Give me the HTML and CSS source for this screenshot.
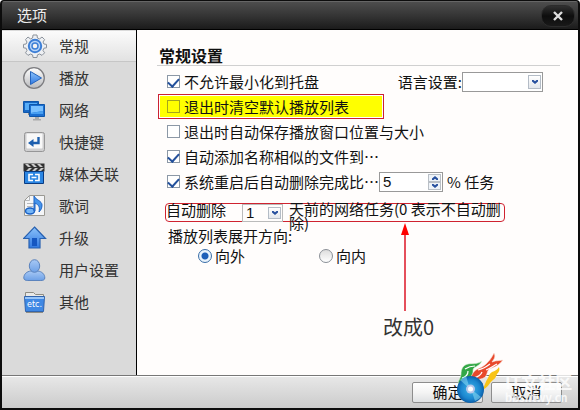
FILE: index.html
```html
<!DOCTYPE html>
<html lang="zh-CN">

<head>
    <meta charset="UTF-8">
    <meta name="viewport" content="width=device-width, initial-scale=1.0">
    <title>选项</title>
    <link rel="stylesheet" href="styles.css">
</head>

<body>
    <div class="window">
        <header class="titlebar">
            <h1 class="title">选项</h1>
            <button class="close" type="button" aria-label="关闭">
                <svg width="10" height="10" viewBox="0 0 10 10"><path d="M1 1l8 8M9 1L1 9" stroke="#ddd" stroke-width="2.4" /></svg>
            </button>
        </header>

        <div class="body">
            <nav class="sidebar">
                <a class="nav-item active" href="#general">
                    <svg class="icon" viewBox="0 0 24 24">
                        <path d="M10 1h4l.4 3 2.2.9L19 3l2.6 2.6L20 8l.9 2 2.6.4v3.4l-2.6.4-.9 2.3 1.6 2.3-2.6 2.6-2.3-1.4-2.3.9-.4 2.6h-4l-.4-2.6-2.2-.9L5 21.400l-2.500-2.600L4 16.500l-.9-2.300-2.600-.4v-3.400l2.600-.4L4 8 2.500 5.600 5 3l2.400 1.900L9.600 4z" fill="#eef0f3" stroke="#8b929b" />
                        <circle cx="12" cy="12" r="6.200" fill="#b9d6f8" stroke="#3d7fd6" stroke-width="2" />
                        <circle cx="12" cy="12" r="3" fill="#f2f2f2" stroke="#3d7fd6" stroke-width="1.5" />
                    </svg>
                    常规
                </a>
                <a class="nav-item" href="#play">
                    <svg class="icon" viewBox="0 0 24 24">
                        <circle cx="11" cy="12" r="10.300" fill="url(#silver)" stroke="#7d7d80" stroke-width="1.3" />
                        <path d="M7.500 5.500v13L18.500 12z" fill="url(#blue)" stroke="#2464bd" />
                    </svg>
                    播放
                </a>
                <a class="nav-item" href="#network">
                    <svg class="icon" viewBox="0 0 24 24">
                        <path d="M.5 3.500h15v11H.5z" fill="#1767c4" stroke="#0f56aa" />
                        <path d="M2 5h12v7H2z" fill="#57adf8" />
                        <path d="M5 15h4v2H5z" fill="#888" />
                        <path d="M6.500 6.500h15v12h-15z" fill="#1c70d2" stroke="#0f56aa" />
                        <path d="M8 8h12v5L8 15z" fill="#7bc1ff" />
                        <path d="M8 15l12-2v3H8z" fill="#48a0f2" />
                        <path d="M12 19h4v2h2v1.500h-8V21h2z" fill="#aaa" />
                    </svg>
                    网络
                </a>
                <a class="nav-item" href="#hotkeys">
                    <svg class="icon" viewBox="0 0 24 24">
                        <rect x="1.500" y="2.500" width="20" height="19" rx="2" fill="#cfcfd0" stroke="#969697" />
                        <rect x="3.500" y="3.500" width="16" height="15" rx="1" fill="#f8f8f8" />
                        <path d="M15.500 7v6H9" fill="none" stroke="#1d5fae" stroke-width="2.4" />
                        <path d="M5 13l5.500-4v8z" fill="#1d5fae" />
                    </svg>
                    快捷键
                </a>
                <a class="nav-item" href="#media">
                    <svg class="icon" viewBox="0 0 24 24">
                        <path d="M.5 1.500h21v8H.5z" fill="#303030" />
                        <path d="M2 2l3 3h3L5 2zM8 2l3 3h3l-3-3zM14 2l3 3h3l-3-3zM3 9l3-3h3L6 9zM9 9l3-3h3l-3 3zM15 9l3-3h3l-3 3z" fill="#c9c9c9" />
                        <path d="M1.500 9.500h19v12h-19z" fill="#2b86e3" stroke="#083b82" />
                        <path d="M10 12.500H6v6h4M12 12.500h4v6h-4M8.500 15.500h5" fill="none" stroke="#fff" stroke-width="1.6" />
                    </svg>
                    媒体关联
                </a>
                <a class="nav-item" href="#lyrics">
                    <svg class="icon" viewBox="0 0 24 24">
                        <path d="M6.500 1.500h15v20h-20v-15z" fill="#f4f5f7" stroke="#9a9993" />
                        <path d="M2 6.500h4.500V2M4 9.500h8M4 12.500h6" fill="none" stroke="#b4b7bb" />
                        <ellipse cx="7" cy="17" rx="4.500" ry="3" fill="#75b6f7" stroke="#1c62c4" stroke-width="1.5" />
                        <path d="M11 17V2c2 4 8 5 8 9 0 3-1 5-3 7 1-5 0-7-4-9v8z" fill="#4594eb" stroke="#1c62c4" />
                    </svg>
                    歌词
                </a>
                <a class="nav-item" href="#update">
                    <svg class="icon" viewBox="0 0 24 24">
                        <path d="M11.500 1L22.500 12.500H17v9.500H6v-9.500H.5z" fill="url(#blue)" stroke="#2861b0" stroke-width="1.2" />
                        <path d="M9 12h5v8H9z" fill="#1557c1" />
                    </svg>
                    升级
                </a>
                <a class="nav-item" href="#user">
                    <svg class="icon" viewBox="0 0 24 24">
                        <path d="M.8 20c0-4 3-6.500 7-7h7c4 .5 7 3 7 7 0 2-2 2.500-4 2.500h-13c-2 0-4-.5-4-2.500z" fill="url(#pale)" stroke="#5b83bd" />
                        <ellipse cx="11.500" cy="8" rx="5.200" ry="6.300" fill="url(#pale)" stroke="#5b83bd" />
                    </svg>
                    用户设置
                </a>
                <a class="nav-item" href="#other">
                    <svg class="icon" viewBox="0 0 24 24">
                        <path d="M2.500 7V2.500h8l2 2h8V7z" fill="#e9e9e7" stroke="#8e8c83" />
                        <path d="M1.500 6.500h20l-1 15h-18z" fill="#3f88e4" stroke="#3164ad" />
                        <path d="M2 7h19v2H2z" fill="#98c5f8" />
                        <path d="M3 22.500h17" stroke="#8e8c83" />
                        <text class="icon-text" x="11.500" y="17" text-anchor="middle">etc.</text>
                    </svg>
                    其他
                </a>
            </nav>

            <main class="content">
                <h2 class="heading">常规设置</h2>

                <div class="row">
                    <input class="check" type="checkbox" id="noTray" checked>
                    <label for="noTray">不允许最小化到托盘</label>
                    <label class="language-label" for="language">语言设置:</label>
                    <span class="select-wrap language">
                        <select class="field" id="language">
                            <option></option>
                        </select>
                        <span class="drop"><svg width="6" height="4" viewBox="0 0 6 4"><path d="M0 0h1.500L3 1.200 4.500 0H6v1.500L3 4 0 1.500z" fill="#27509e" /></svg></span>
                    </span>
                </div>
                <div class="row highlight">
                    <input class="check" type="checkbox" id="clearList">
                    <label for="clearList">退出时清空默认播放列表</label>
                </div>
                <div class="row">
                    <input class="check" type="checkbox" id="savePos">
                    <label for="savePos">退出时自动保存播放窗口位置与大小</label>
                </div>
                <div class="row">
                    <input class="check" type="checkbox" id="addSimilar" checked>
                    <label for="addSimilar">自动添加名称相似的文件到⋯</label>
                </div>
                <div class="row">
                    <input class="check" type="checkbox" id="delDone" checked>
                    <label for="delDone">系统重启后自动删除完成比⋯</label>
                    <span class="spin-wrap">
                        <input class="field" type="number" value="5" aria-label="完成比例">
                        <span class="spin">
                            <button class="spin-button" type="button" aria-label="增加"><svg width="6" height="4" viewBox="0 0 6 4"><path d="M0 4h1.500L3 2.800 4.500 4H6V2.500L3 0 0 2.500z" fill="#27509e" /></svg></button>
                            <button class="spin-button" type="button" aria-label="减少"><svg width="6" height="4" viewBox="0 0 6 4"><path d="M0 0h1.500L3 1.200 4.500 0H6v1.500L3 4 0 1.500z" fill="#27509e" /></svg></button>
                        </span>
                    </span>
                    <span class="unit">% 任务</span>
                </div>

                <div class="auto-delete">
                    <label class="auto-label" for="days">自动删除</label>
                    <span class="select-wrap days">
                        <select class="field" id="days">
                            <option>1</option>
                        </select>
                        <span class="drop"><svg width="6" height="4" viewBox="0 0 6 4"><path d="M0 0h1.500L3 1.200 4.500 0H6v1.500L3 4 0 1.500z" fill="#27509e" /></svg></span>
                    </span>
                    <span class="auto-text">天前的网络任务(0 表示不自动删除)</span>
                    <div class="note">
                        <svg class="arrow" width="10" height="88" viewBox="0 0 10 88">
                            <path d="M5 8v80" stroke="#dc1426" stroke-width="1.5" />
                            <path d="M5 0l4 12H1z" fill="#f00" />
                        </svg>
                        <span class="note-text">改成0</span>
                    </div>
                </div>

                <fieldset class="direction">
                    <legend>播放列表展开方向:</legend>
                    <div class="radios">
                        <label class="radio-label"><input class="radio" type="radio" name="direction" checked>向外</label>
                        <label class="radio-label"><input class="radio" type="radio" name="direction">向内</label>
                    </div>
                </fieldset>
            </main>
        </div>

        <footer class="footer">
            <button class="button" type="button">确定</button>
            <button class="button" type="button">取消</button>
            <div class="watermark">
                <svg width="48" height="52" viewBox="0 0 48 52">
                    <path d="M25 38c3-4 3-8 6-12 1-2 1-4 4-6 3-1 5-2 7-5 1 3 0 5-2 7-1 2-1 4-4 6-4 3-5 8-11 10z" fill="#f8c417" />
                    <path d="M1 32c0-4 3-6 3-10 0-5 2-9 7-10 4-1 8 1 14-3-2 4-5 5-8 7-2 2 0 5-2 8-2 4-9 3-14 8z" fill="#33a746" stroke="#e8f3df" stroke-width=".6" />
                    <path d="M5 26c4-1 6-4 6-7M8 17c3-2 5-3 10-3" fill="none" stroke="#fff" stroke-width="1.2" />
                    <path d="M12 31c3-3 1-6 4-10 3-5 8-4 13-9 3-3 5-5 8-11 2 4 0 6-2 9 5-2 7-1 11-2-3 4-6 6-11 8-5 1-4 4-6 8-4 5-11 2-17 7z" fill="#e8492c" stroke="#fbe7df" stroke-width=".6" />
                    <path d="M16 26c5-1 8-3 9-6M21 18c5-1 8-3 12-6M29 18c4-1 7-4 11-6" fill="none" stroke="#fff" stroke-width="1.2" />
                    <circle cx="13.500" cy="37.500" r="13.500" fill="url(#disc)" />
                    <path d="M13 37L3 28a13 13 0 0 1 6-4zM14 37l10 8a13 13 0 0 1-6 4z" fill="#8adcf4" opacity=".55" />
                    <circle cx="13.500" cy="37" r="4.500" fill="#b7c7ea" />
                    <circle cx="13.500" cy="37" r="2.500" fill="#fff" />
                </svg>
                <div class="watermark-text">
                    <span class="watermark-name">IT文社区</span>
                    <span class="watermark-url">bbs.itwy.cn</span>
                </div>
            </div>
        </footer>
    </div>

    <!-- 图标用的渐变 -->
    <svg class="defs" width="0" height="0">
        <defs>
            <linearGradient id="silver" x1="0" y1="0" x2="0" y2="1">
                <stop offset="0" stop-color="#fff" />
                <stop offset="1" stop-color="#b9babd" />
            </linearGradient>
            <linearGradient id="blue" x1="0" y1="0" x2="0" y2="1">
                <stop offset="0" stop-color="#8cc3fb" />
                <stop offset="1" stop-color="#3078e0" />
            </linearGradient>
            <linearGradient id="pale" x1="0" y1="0" x2="0" y2="1">
                <stop offset="0" stop-color="#a8c9f5" />
                <stop offset="1" stop-color="#6da0e6" />
            </linearGradient>
            <radialGradient id="disc">
                <stop offset="0" stop-color="#3fb4e8" />
                <stop offset=".7" stop-color="#1b86cf" />
                <stop offset="1" stop-color="#0b5ea8" />
            </radialGradient>
        </defs>
    </svg>
</body>

</html>
```
FILE: styles.css
```css
* {
    box-sizing: border-box;
}

body {
    margin: 0;
    background: #fff;
    font-family: "Noto Sans CJK SC", sans-serif;
    font-size: 15px;
    line-height: 16px;
    color: #111;
}

button,
input,
select {
    font: inherit;
    color: inherit;
    margin: 0;
    padding: 0;
}

svg {
    display: block;
}

.defs {
    position: absolute;
}

.window {
    display: flex;
    flex-direction: column;
    min-height: 100vh;
    border: 2px solid #0c0c0c;
    border-top-width: 1px;
    border-radius: 4px 4px 0 0;
    overflow: hidden;
    background: #0c0c0c;
}

.titlebar {
    display: flex;
    align-items: center;
    justify-content: space-between;
    height: 29px;
    padding: 0 3px 0 15px;
    background: linear-gradient(#4d4d4d, #353535 50%, #1b1b1b);
    border-top: 1px solid #666;
    border-bottom: 1px solid #000;
}

.title {
    margin: 0;
    font-size: 15px;
    font-weight: normal;
    line-height: 24px;
    padding-bottom: 2px;
    color: #eee;
}

.close {
    display: flex;
    align-items: center;
    justify-content: center;
    width: 34px;
    height: 22px;
    border: 1px solid #2c2c2c;
    border-radius: 10px;
    background: linear-gradient(#303030, #0d0d0d 50%, #191919);
}

.body {
    display: flex;
    flex: 1;
    background: #fffdfc;
}

.sidebar {
    width: 135px;
    background: #dadada;
    border-right: 1px solid #000;
}

.nav-item {
    display: flex;
    align-items: center;
    gap: 12px;
    height: 32px;
    padding-left: 21px;
    color: #333;
    text-decoration: none;
}

.nav-item.active {
    background: linear-gradient(#fbfbfb, #e2e2e2);
    border-top: 1px solid #dadada;
    border-bottom: 1px solid #c6c6c6;
}

.icon {
    width: 24px;
    height: 24px;
}

.icon-text {
    font-family: "DejaVu Sans", sans-serif;
    font-size: 8px;
    fill: #fff;
}

.content {
    flex: 1;
    padding: 10px 18px 0 20px;
}

.heading {
    margin: 0 0 3px;
    padding: 5px 0 0 2px;
    font-size: 16px;
    line-height: 20px;
    border-bottom: 1px solid #d0d0d0;
}

.row {
    display: flex;
    align-items: center;
    height: 25px;
    padding-left: 10px;
    white-space: nowrap;
}

.check {
    appearance: none;
    display: flex;
    justify-content: center;
    width: 13px;
    height: 13px;
    margin-right: 4px;
    background: #fff;
    border: 1px solid #8c98a6;
}

.check:checked::before {
    content: "";
    width: 5px;
    height: 9px;
    border: solid #24519c;
    border-width: 0 2px 2px 0;
    transform: rotate(42deg);
}

.highlight {
    width: 226px;
    padding-left: 8px;
    margin-left: 1px;
    border: 1px solid #cc2233;
    background: #ff0;
    box-shadow: inset 0 0 0 1px #fff;
}

.highlight .check {
    background: #ff0;
    border-color: #a5a51c;
}

.language-label {
    margin-left: auto;
}

.select-wrap,
.spin-wrap {
    position: relative;
    height: 20px;
}

.language {
    width: 81px;
    margin-right: 17px;
}

.field {
    appearance: none;
    display: block;
    width: 100%;
    height: 100%;
    padding-left: 3px;
    border: 1px solid #999;
    border-radius: 0;
    background: #fff;
    font-family: "Liberation Sans", sans-serif;
}

.field::-webkit-inner-spin-button {
    appearance: none;
}

.drop {
    position: absolute;
    top: 3px;
    right: 2px;
    bottom: 3px;
    display: flex;
    align-items: center;
    justify-content: center;
    width: 13px;
    border: 1px solid #b4bcc6;
    background: linear-gradient(#fff, #e3e7ec);
    pointer-events: none;
}

.spin-wrap {
    width: 64px;
}

.spin {
    position: absolute;
    top: 2px;
    right: 2px;
    bottom: 2px;
    display: flex;
    flex-direction: column;
    width: 13px;
}

.spin-button {
    display: flex;
    flex: 1;
    align-items: center;
    justify-content: center;
    border: 1px solid #b9bfc6;
    background: #eef3f8;
}

.unit {
    margin-left: 4px;
}

.auto-delete {
    position: relative;
    display: flex;
    width: 340px;
    height: 19px;
    margin: 9px 0 0 8px;
    border: 1px solid #cf2330;
    border-radius: 4px;
}

.auto-label {
    width: 76px;
    line-height: 12px;
}

.days {
    width: 41px;
    height: 18px;
}

.days .field {
    border-color: #bbb;
    background: transparent;
}

.auto-text {
    flex: 1;
    margin: -2px 0 0 6px;
    line-height: 14px;
}

/* 箭头和说明文字, 盖在表单上 */
.note {
    position: absolute;
    top: 19px;
    left: 217px;
}

.arrow {
    margin-left: 17px;
}

.note-text {
    display: block;
    margin-top: 6px;
    font-size: 20px;
    line-height: 20px;
    color: #333;
}

.direction {
    margin: 6px 0 0;
    padding: 0 0 0 11px;
    border: 0;
}

.direction legend {
    padding: 0;
}

.radios {
    display: flex;
    gap: 74px;
    padding: 4px 0 0 30px;
}

.radio-label {
    display: flex;
    align-items: center;
    gap: 3px;
}

.radio {
    appearance: none;
    width: 14px;
    height: 14px;
    border: 1px solid #8a8f96;
    border-radius: 50%;
    background: linear-gradient(#ddd, #fff);
}

.radio:checked {
    border-color: #3a6ea8;
    background: radial-gradient(circle, #1d5fb8 3px, #e9f3fc 4px);
}

.footer {
    position: relative;
    display: flex;
    align-items: center;
    justify-content: flex-end;
    gap: 8px;
    height: 33px;
    padding-right: 16px;
    background: linear-gradient(#e8e8e8, #cbcbcb);
    border-top: 1px solid #777;
    box-shadow: inset 0 1px 0 #fff;
}

.button {
    width: 71px;
    height: 21px;
    border: 1px solid #8d8d8d;
    border-radius: 2px;
    background: linear-gradient(#fff, #f4f4f4 50%, #dfe1e3);
    line-height: 16px;
}

.watermark {
    position: absolute;
    right: 7px;
    bottom: 4px;
    display: flex;
    align-items: flex-end;
    pointer-events: none;
}

.watermark-text {
    display: flex;
    flex-direction: column;
    width: 66px;
    color: rgba(255, 255, 255, 0.8);
    font-weight: bold;
    white-space: nowrap;
}

.watermark-name {
    font-size: 17px;
    line-height: 16px;
}

.watermark-url {
    font-size: 11px;
    line-height: 14px;
}
```
